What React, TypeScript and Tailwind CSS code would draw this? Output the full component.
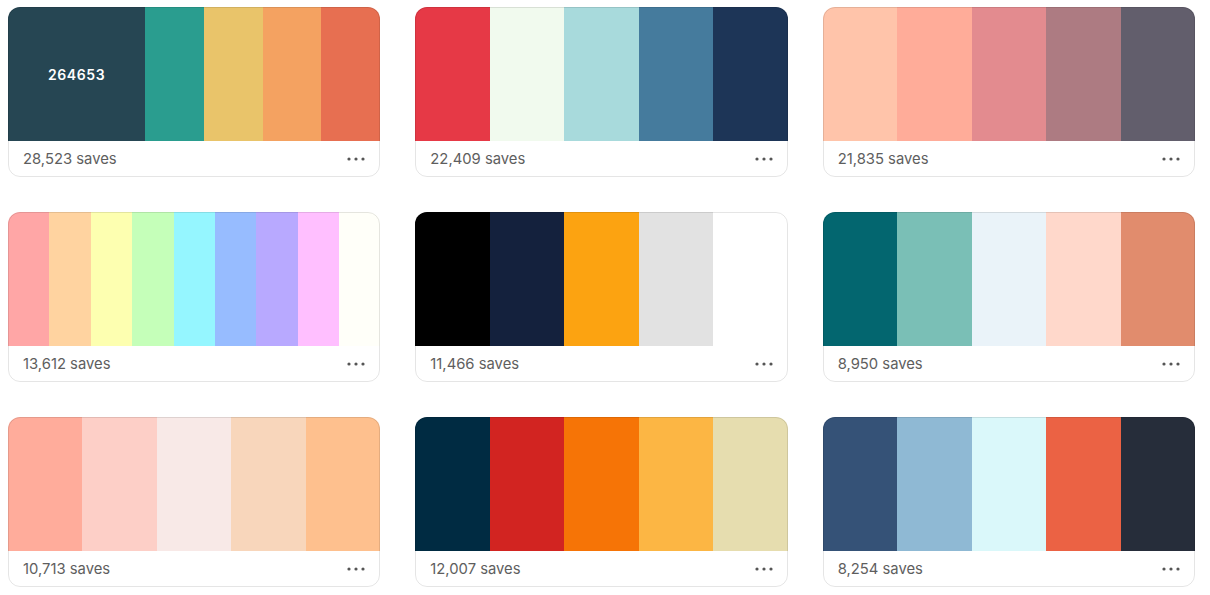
import { useState } from "react";

type Palette = { colors: string[]; saves: string };

const palettes: Palette[] = [
  { colors: ["264653", "2A9D8F", "E9C46A", "F4A261", "E76F51"], saves: "28,523" },
  { colors: ["E63946", "F1FAEE", "A8DADC", "457B9D", "1D3557"], saves: "22,409" },
  { colors: ["FFC4AA", "FFAC99", "E38B8F", "AD7B82", "625E6C"], saves: "21,835" },
  { colors: ["FFA6A6", "FFD3A0", "FDFFB0", "C5FFB9", "95F6FF", "97BCFF", "B8A9FF", "FFBFFF", "FFFFF9"], saves: "13,612" },
  { colors: ["000000", "14213D", "FCA311", "E2E2E2", "FFFFFF"], saves: "11,466" },
  { colors: ["03666F", "7ABFB6", "EAF3F9", "FFD8CB", "E18C6D"], saves: "8,950" },
  { colors: ["FFAC9B", "FDCFC7", "F8E9E7", "F8D6BB", "FEC08E"], saves: "10,713" },
  { colors: ["002B42", "D22421", "F67406", "FCB644", "E6DDAF"], saves: "12,007" },
  { colors: ["355277", "8FB9D4", "DAF8FA", "EB6244", "262D3A"], saves: "8,254" },
];

export default function App() {
  const [hover, setHover] = useState<{ card: number; swatch: number } | null>({ card: 0, swatch: 0 });

  return (
    <div className="min-h-[595px] w-[1210px] bg-white font-['Inter','Liberation_Sans',sans-serif]">
      <div className="grid grid-cols-3 gap-x-[35px] gap-y-[35px] pl-2 pr-[15px] pt-[7px]">
        {palettes.map((palette, card) => (
          <div key={card} className="relative h-[170px] rounded-xl bg-white">
            <div className="flex h-[134px] overflow-hidden rounded-t-xl" onMouseLeave={() => setHover(null)}>
              {palette.colors.map((color, swatch) => {
                const active = hover?.card === card && hover?.swatch === swatch;
                return (
                  <div
                    key={swatch}
                    onMouseEnter={() => setHover({ card, swatch })}
                    className={`flex items-center justify-center ${active ? "flex-[2.33]" : "flex-1"}`}
                    style={{ backgroundColor: `#${color}` }}
                  >
                    {active && <span className="text-[14px] font-semibold tracking-[0.6px] text-white">{color}</span>}
                  </div>
                );
              })}
            </div>
            <div className="flex h-[36px] items-center justify-between pl-[15px] pr-[15px]">
              <span className="text-[14.8px] text-[#5e5e5e]">{palette.saves} saves</span>
              <svg width="18" height="6" viewBox="0 0 18 6" className="text-[#555]" aria-label="More">
                <circle cx="2" cy="3" r="1.6" fill="currentColor" />
                <circle cx="9" cy="3" r="1.6" fill="currentColor" />
                <circle cx="16" cy="3" r="1.6" fill="currentColor" />
              </svg>
            </div>
            <div className="pointer-events-none absolute inset-0 rounded-xl border border-black/10" />
          </div>
        ))}
      </div>
    </div>
  );
}
